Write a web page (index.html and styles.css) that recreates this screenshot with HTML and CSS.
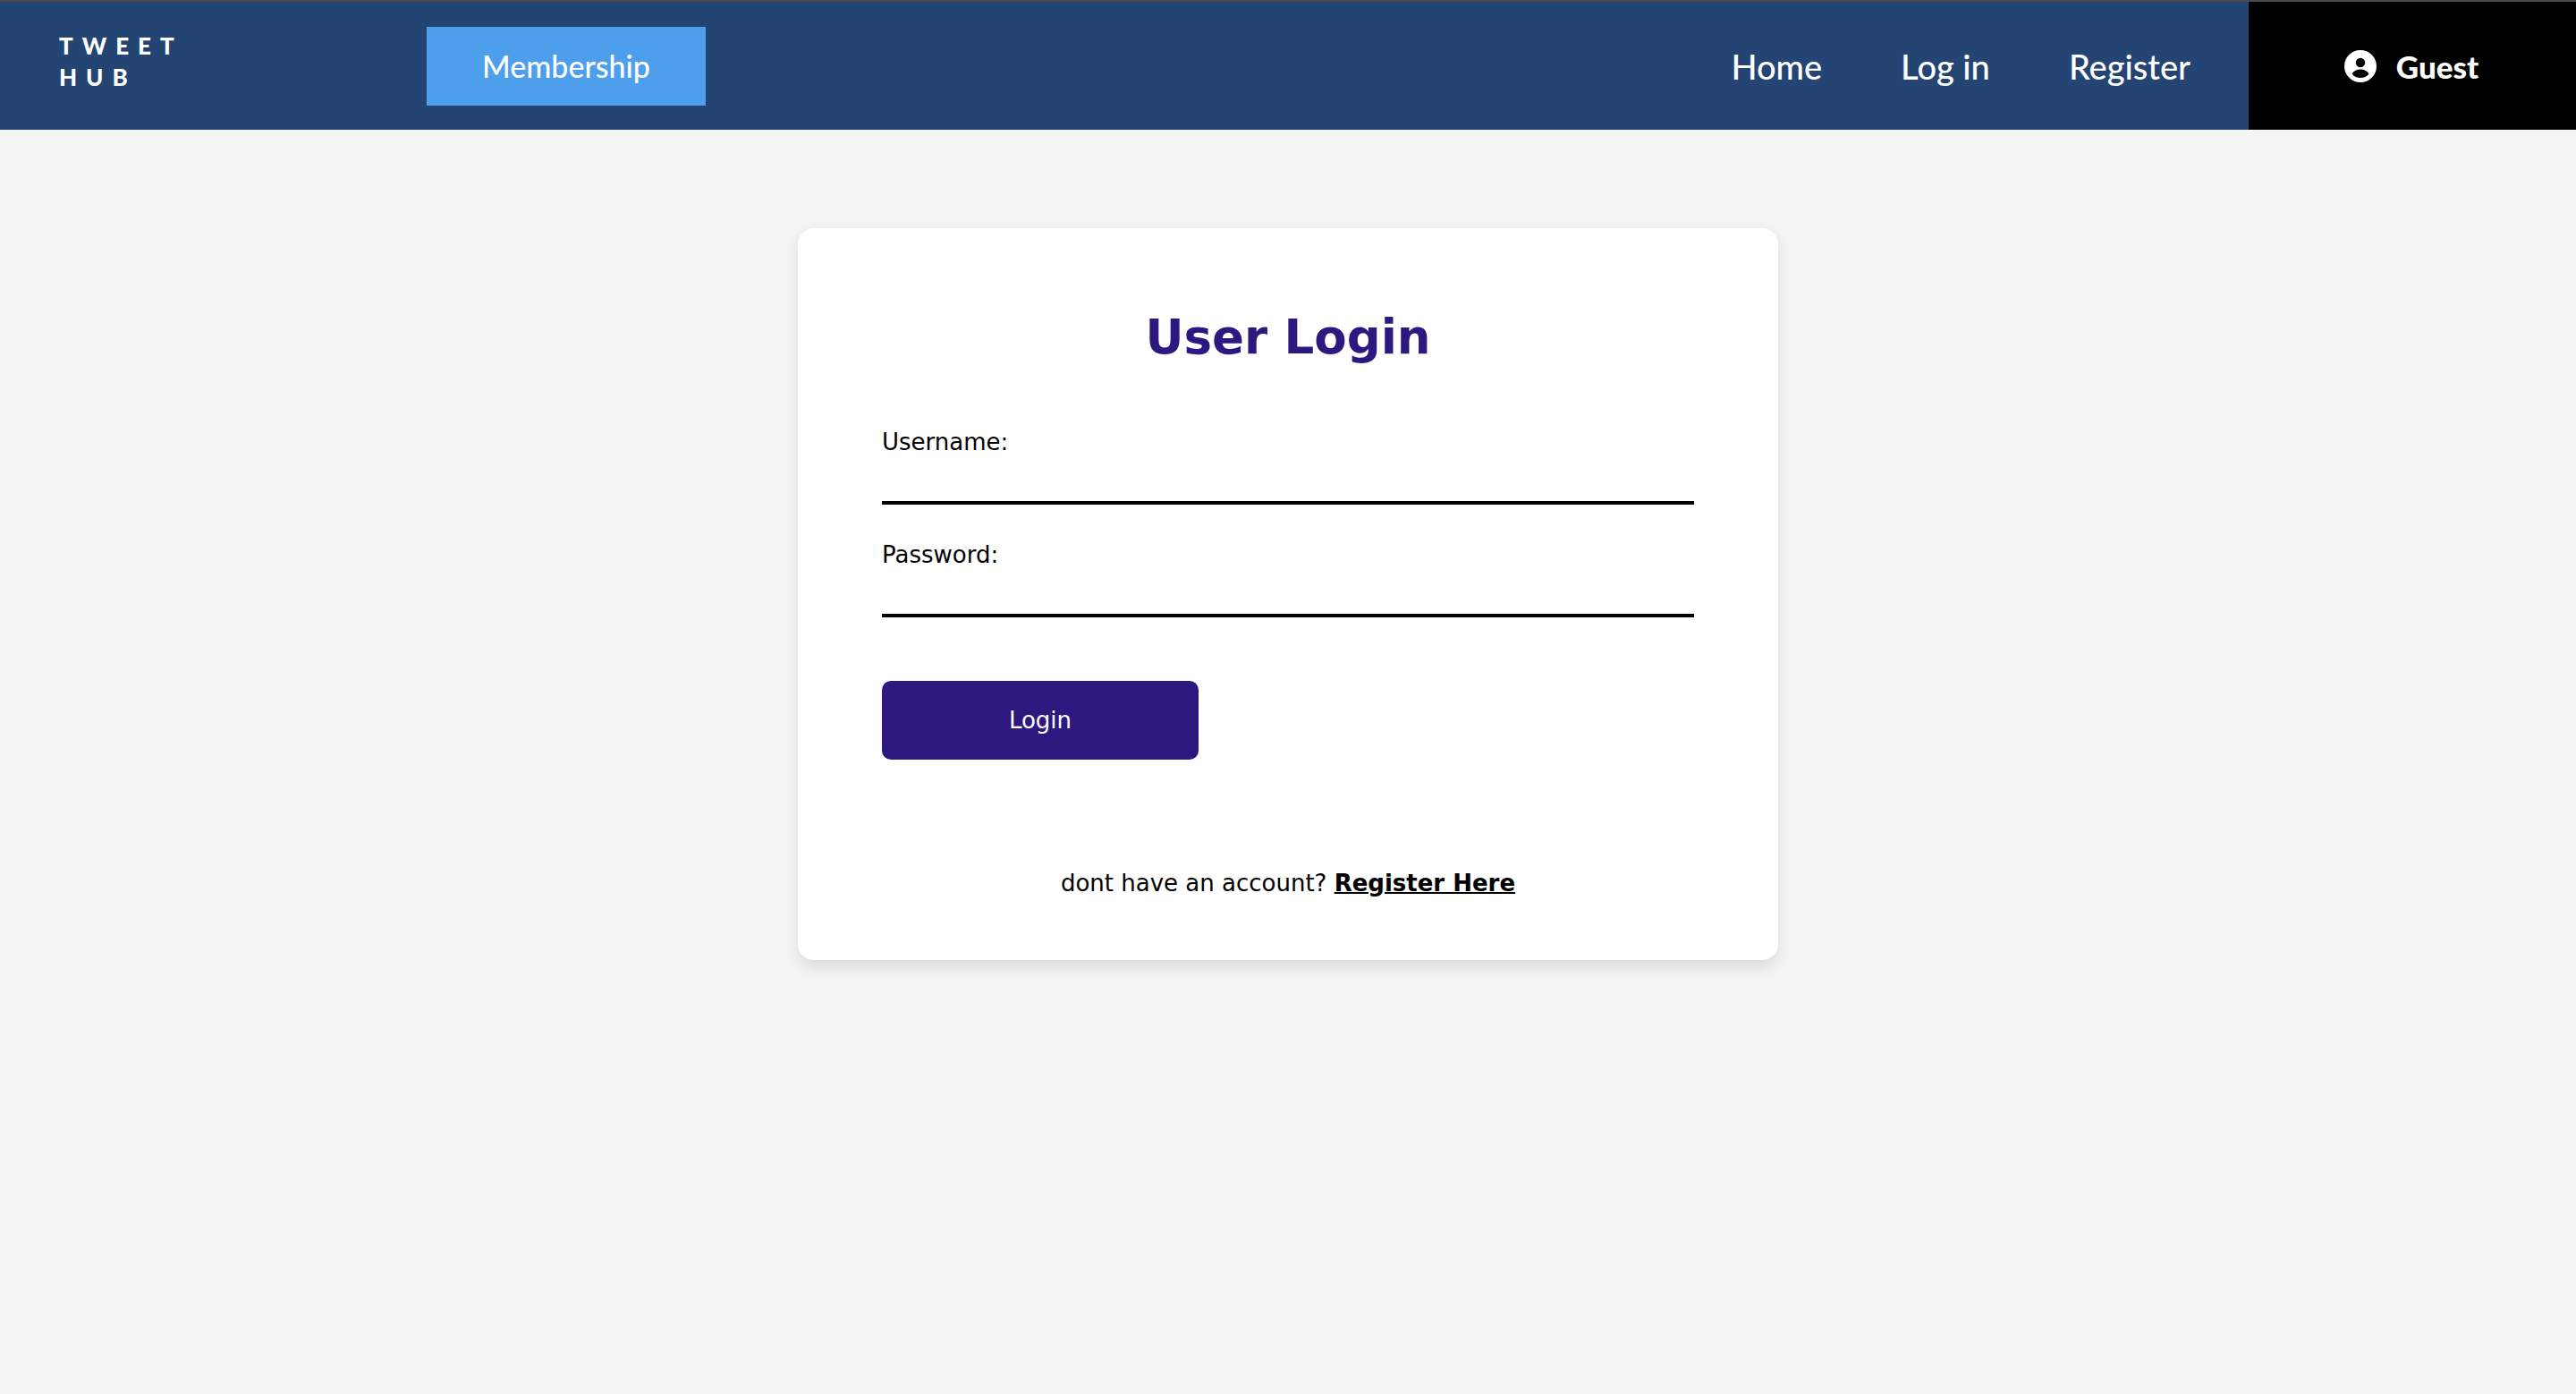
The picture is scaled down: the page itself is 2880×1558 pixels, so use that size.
FILE: index.html
```html
<!DOCTYPE html>
<html lang="en">
<head>
  <meta charset="utf-8">
  <title>Tweet Hub</title>
  <link rel="stylesheet" href="styles.css">
</head>
<body>
  <header class="header">
    <div class="brand"><a class="logo" href="#">TWEET<br>HUB</a></div>
    <a class="membership" href="#">Membership</a>
    <nav class="nav">
      <a href="#">Home</a>
      <a href="#">Log in</a>
      <a href="#">Register</a>
    </nav>
    <div class="user">
      <svg class="user-icon" viewBox="0 0 36 36" aria-hidden="true">
        <circle cx="18" cy="18" r="18" fill="#fff"/>
        <circle cx="18" cy="14" r="5.2" fill="#000"/>
        <path d="M8.500 26.500c2-3.500 6-5 9.500-5s7.500 1.500 9.500 5c-2 3-6 4.500-9.500 4.500s-7.500-1.500-9.500-4.500z" fill="#000"/>
      </svg>
      <span>Guest</span>
    </div>
  </header>
  <main class="main">
    <form class="card">
      <h1 class="title">User Login</h1>
      <div class="field">
        <label for="username">Username:</label>
        <input id="username" type="text">
      </div>
      <div class="field">
        <label for="password">Password:</label>
        <input id="password" type="password">
      </div>
      <button class="submit" type="button">Login</button>
      <p class="hint">dont have an account? <a href="#">Register Here</a></p>
    </form>
  </main>
</body>
</html>
```
FILE: styles.css
```css
* {
  box-sizing: border-box;
}

body {
  margin: 0;
  background: #f4f4f4;
  color: #000;
  font: 26px/32px "DejaVu Sans", sans-serif;
}

.header {
  display: flex;
  align-items: stretch;
  border-top: 2px solid #4a4a4e;
  background: #244474;
  color: #fff;
  font-family: Lato, sans-serif;
  font-weight: 500;
}

.header a {
  color: inherit;
  text-decoration: none;
}

.brand {
  display: flex;
  align-items: center;
  width: 477px;
  padding: 0 0 10px 66px;
}

.logo {
  font-size: 26px;
  line-height: 35px;
  font-weight: 900;
  letter-spacing: 10px;
}

.membership {
  display: flex;
  align-items: center;
  justify-content: center;
  width: 312px;
  height: 88px;
  margin: 28px 0 27px;
  background: #4d9eeb;
  font-size: 34px;
}

.nav {
  display: flex;
  flex: 1;
  align-items: center;
  justify-content: flex-end;
  gap: 88px;
  padding-right: 65px;
  font-size: 38px;
}

.user {
  display: flex;
  align-items: center;
  justify-content: center;
  gap: 22px;
  width: 366px;
  padding-right: 2px;
  background: #000;
  font-size: 35px;
  font-weight: 900;
}

.user-icon {
  width: 36px;
  height: 36px;
}

.main {
  padding: 110px 24px;
}

.card {
  max-width: 1096px;
  margin: 0 auto;
  padding: 90px 94px 70px;
  border-radius: 18px;
  background: #fff;
  box-shadow: 0 8px 16px rgba(0, 0, 0, 0.1);
}

.title {
  margin: 0 0 69px;
  color: #2c187e;
  font-size: 53px;
  line-height: 64px;
  text-align: center;
}

.field {
  display: flex;
  flex-direction: column;
  gap: 4px;
  margin-bottom: 40px;
}

.field input {
  width: 100%;
  height: 50px;
  padding: 0 4px;
  border: 0;
  border-bottom: 4px solid #000;
  outline: 0;
  background: transparent;
  font: inherit;
}

.submit {
  display: block;
  width: 354px;
  height: 88px;
  margin-top: 71px;
  border: 0;
  border-radius: 10px;
  background: #2c187e;
  color: #fff;
  font: inherit;
}

.hint {
  margin: 122px 0 0;
  text-align: center;
}

.hint a {
  color: inherit;
  font-weight: 700;
  text-decoration-thickness: 2px;
}
```
